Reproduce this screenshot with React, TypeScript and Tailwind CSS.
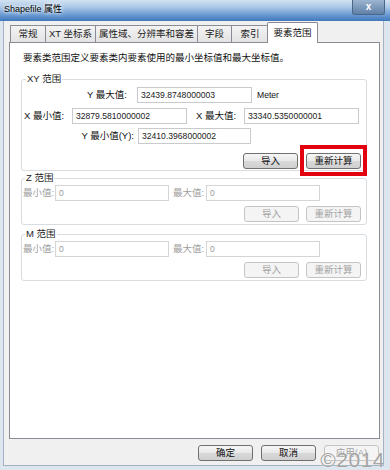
import React from 'react';

const FONT = "font-['Liberation_Sans','Noto_Sans_CJK_SC',sans-serif]";

function Tab({ label, w, active }: { label: string; w: string; active?: boolean }) {
    return active ? (
        <div
            className={`${w} relative z-10 -mb-px -mx-[2px] flex h-[21px] items-center justify-center rounded-t-[2px] border border-b-0 border-[#898c95] bg-white pt-[1px] text-[9.5px] text-[#111]`}
        >
            {label}
        </div>
    ) : (
        <div
            className={`${w} flex h-[17px] items-center justify-center border border-b-0 border-l-0 border-[#898c95] bg-[linear-gradient(to_bottom,#f3f3f3,#e3e3e3)] text-[9.5px] text-[#222] first:border-l`}
        >
            {label}
        </div>
    );
}

function Field({ value, w, disabled }: { value: string; w: string; disabled?: boolean }) {
    return (
        <div
            className={`${w} flex h-[16px] items-center border bg-white pl-[3px] text-[8.6px] ${
                disabled ? 'border-[#d5d5d5] text-[#9a9a9a]' : 'border-[#c9cacd] text-[#222]'
            }`}
        >
            {value}
        </div>
    );
}

function Btn({ label, disabled, w = 'w-[55px]' }: { label: string; disabled?: boolean; w?: string }) {
    return (
        <div
            className={`${w} flex h-[16px] items-center justify-center rounded-[3px] border text-[9.5px] ${
                disabled
                    ? 'border-[#c4c4c4] bg-[#f4f4f4] text-[#a3a3a3]'
                    : 'border-[#707070] bg-[linear-gradient(to_bottom,#f6f6f6_0%,#e8e8e8_50%,#d9d9d9_51%,#cfcfcf_100%)] text-[#111]'
            }`}
        >
            {label}
        </div>
    );
}

function DisabledRange({ title }: { title: string }) {
    return (
        <fieldset className="rounded-[3px] border border-[#d8dde2] pb-[2px]">
            <legend className="ml-[3px] px-[1px] text-[9.5px] leading-[12px] text-[#222]">{title}</legend>
            <div className="mt-[1px] flex items-center text-[9.5px] text-[#a0a0a0]">
                <span className="w-[33px] pl-[1px]">最小值:</span>
                <Field value="0" w="w-[114px]" disabled />
                <span className="w-[37px] pl-[4px]">最大值:</span>
                <Field value="0" w="w-[114px]" disabled />
            </div>
            <div className="mt-[5px] flex justify-end gap-[7px] pr-[5px]">
                <Btn label="导入" disabled />
                <Btn label="重新计算" disabled />
            </div>
        </fieldset>
    );
}

export default function App() {
    return (
        <div className={`${FONT} relative flex h-[470px] w-[390px] flex-col overflow-hidden bg-[#dde6ef]`}>
            {/* Title bar */}
            <div className="flex h-[21px] shrink-0 items-start bg-[linear-gradient(to_bottom,#d3e2f1_0%,#a9c7e6_35%,#6b9bd2_70%,#3f78bd_100%)]">
                <span className="pl-[4px] pt-[3px] text-[9px] text-black [text-shadow:0_0_5px_#fff,0_0_3px_#fff]">
                    Shapefile 属性
                </span>
                <div className="ml-auto mr-[5px] flex h-[15px] w-[33px] items-center justify-center rounded-b-[3px] border border-t-0 border-[#4a6688] bg-[linear-gradient(to_bottom,#9cb4cf,#5f81a8)] text-[10px] font-bold leading-none text-white">
                    x
                </div>
            </div>

            {/* Body */}
            <div className="mb-[4px] ml-[3px] mr-[6px] flex flex-1 flex-col border border-t-0 border-[#a3b3c4] bg-[#f0f0f0] pl-[5px] pr-[3px]">
                <div className="flex items-end pl-[1px] pt-[1px]">
                    <Tab label="常规" w="w-[36px]" />
                    <Tab label="XT 坐标系" w="w-[50px]" />
                    <Tab label="属性域、分辨率和容差" w="w-[102px]" />
                    <Tab label="字段" w="w-[34px]" />
                    <Tab label="索引" w="w-[37px]" />
                    <Tab label="要素范围" w="w-[51px]" active />
                </div>

                {/* Tab panel */}
                <div className="flex h-[397px] w-[371px] flex-col border border-[#898c95] bg-white pl-[11px] pr-[12px] pt-[9px] text-[9.5px] text-[#111]">
                    <div className="pl-[2px] leading-[12px]">要素类范围定义要素类内要素使用的最小坐标值和最大坐标值。</div>

                    <fieldset className="mt-[9px] rounded-[3px] border border-[#d8dde2] pb-[1px]">
                        <legend className="ml-[4px] px-[1px] leading-[12px] text-[#222]">XY 范围</legend>
                        <div className="mt-[2px] flex items-center">
                            <span className="w-[115px] pr-[10px] text-right">Y 最大值:</span>
                            <Field value="32439.8748000003" w="w-[115px]" />
                            <span className="pl-[5px] text-[8.6px]">Meter</span>
                        </div>
                        <div className="mt-[5px] flex items-center">
                            <span className="w-[50px] pl-[2px]">X 最小值:</span>
                            <Field value="32879.5810000002" w="w-[115px]" />
                            <span className="w-[57px] pl-[9px]">X 最大值:</span>
                            <Field value="33340.5350000001" w="w-[115px]" />
                        </div>
                        <div className="mt-[4px] flex items-center">
                            <span className="w-[116px] pr-[4px] text-right">Y 最小值(Y):</span>
                            <Field value="32410.3968000002" w="w-[113px]" />
                        </div>
                        <div className="mt-[9px] flex justify-end gap-[8px] pr-[5px]">
                            <Btn label="导入" />
                            <div className="relative">
                                <Btn label="重新计算" />
                                <span className="pointer-events-none absolute -bottom-[7px] -left-[6px] -right-[6px] -top-[8px] border-[4px] border-[#e3000f]" />
                            </div>
                        </div>
                    </fieldset>

                    <div className="mt-[1px]">
                        <DisabledRange title="Z 范围" />
                    </div>
                    <div className="mt-[3px]">
                        <DisabledRange title="M 范围" />
                    </div>
                </div>

                {/* Dialog buttons */}
                <div className="mt-[6px] flex justify-end gap-[8px] pr-[1px]">
                    <Btn label="确定" />
                    <Btn label="取消" />
                    <Btn label="应用(A)" disabled />
                </div>
            </div>

            <span className="pointer-events-none absolute bottom-[0px] right-[5px] font-['Liberation_Sans',sans-serif] text-[21px] leading-none tracking-[0.5px] text-[#8c8c8c]/80 [text-shadow:0_0_1px_#fff]">
                ©2014
            </span>
        </div>
    );
}
